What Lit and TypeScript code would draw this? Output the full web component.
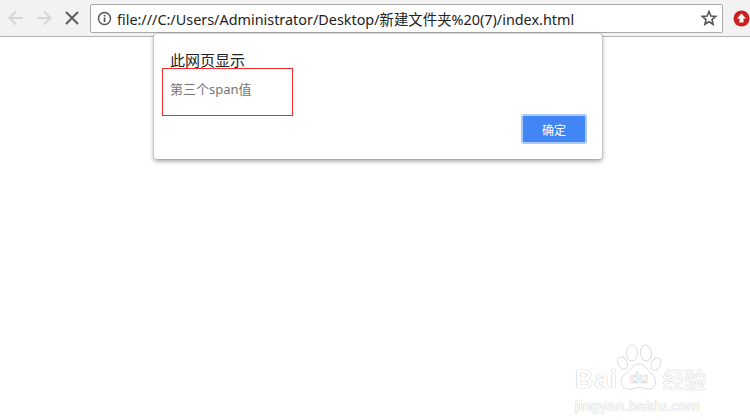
import { LitElement, html, css, svg } from "lit";
import { customElement } from "lit/decorators.js";

@customElement("app-root")
export class AppRoot extends LitElement {
  static styles = css`
    :host { display: block; width: 750px; height: 420px; background: #fff; position: relative; overflow: hidden; font-family: "Liberation Sans", "Noto Sans CJK SC", sans-serif; }
    .toolbar { height: 36px; box-sizing: content-box; background: #f2f2f2; border-bottom: 1px solid #b4b4b4; display: flex; align-items: center; padding-left: 6px; }
    .nav { width: 20px; height: 20px; display: block; flex: none; }
    .back { margin-right: 8px; }
    .fwd { margin-right: 8px; }
    .stop { margin-right: 8px; }
    .omni { width: 633px; height: 29px; box-sizing: border-box; flex: none; background: #fff; border: 1px solid #a9a9a9; border-radius: 2px; display: flex; align-items: center; padding: 0 4px 0 6px; }
    .info { width: 15px; height: 15px; flex: none; margin-right: 5px; }
    .url { flex: 1; font-family: "Noto Sans", "Noto Sans CJK SC", sans-serif; font-size: 14.4px; color: #222; white-space: nowrap; }
    .star { width: 18px; height: 18px; flex: none; }
    .ext { width: 17px; height: 17px; flex: none; margin-left: 10px; }
    .dialog { position: absolute; left: 154px; top: 34px; width: 448px; height: 125px; box-sizing: border-box; background: #fff; border-radius: 2px; box-shadow: 0 0 1px rgba(0,0,0,.55), 0 2px 5px rgba(0,0,0,.4); padding: 18px 15px 0 16px; display: flex; flex-direction: column; }
    .title { font-size: 15px; line-height: 17px; color: #222; }
    .msg { font-family: "Noto Sans", "Noto Sans CJK SC", sans-serif; font-size: 13px; line-height: 17px; color: #757575; margin-top: 12px; }
    .actions { display: flex; justify-content: flex-end; margin-top: 16px; }
    .ok { width: 66px; height: 30px; box-sizing: border-box; background: #4285f4; border: 2px solid #a9c8fb; border-radius: 3px; color: #fff; font: 12px "Liberation Sans", "Noto Sans CJK SC", sans-serif; padding: 0; }
    .mark { position: absolute; left: 162px; top: 68px; width: 131px; height: 48px; box-sizing: border-box; border: 1px solid #f03030; pointer-events: none; }
    .wm { position: absolute; left: 575px; top: 338px; width: 170px; color: #fff; }
    .wm-row { display: flex; align-items: flex-end; height: 55px; }
    .wm-text { color: #fff; text-shadow: 0 0 1px #c4c4c4, 0 0 1px #c4c4c4; font-weight: 700; }
    .bai { font-size: 25px; line-height: 27px; letter-spacing: 1.500px; }
    .paw { width: 44px; height: 50px; flex: none; margin: 0 0 -1px -1px; }
    .jy { font-size: 22px; line-height: 24px; font-weight: 400; margin-left: 1px; }
    .dom { font-size: 14.5px; line-height: 18px; letter-spacing: .5px; font-weight: 400; margin-top: 4px; }
  `;

  private paw() {
    const s = "#dcdcdc";
    return svg`<svg class="paw" viewBox="0 0 44 50" fill="#fff" stroke="${s}" stroke-width="1">
      <ellipse cx="15" cy="9" rx="5.5" ry="8"/>
      <ellipse cx="29" cy="9" rx="5.5" ry="8" transform="rotate(-8 29 9)"/>
      <ellipse cx="5.5" cy="19" rx="4.5" ry="6.5" transform="rotate(-25 5.5 19)"/>
      <ellipse cx="39" cy="20" rx="4.5" ry="6.5" transform="rotate(25 39 20)"/>
      <path d="M22 20c6 0 8 6 13 10 5 4 5 14-2 15-4 .6-7-1.500-11-1.500S15 46 10 45C3 44 2 34 8 30c6-4 8-10 14-10z"/>
      <text x="22" y="39" text-anchor="middle" font-family="Liberation Sans, sans-serif" font-size="15" font-weight="700" fill="#fff" stroke="#cfcfcf" stroke-width=".6">du</text>
    </svg>`;
  }

  render() {
    return html`
      <div class="toolbar">
        <svg class="nav back" viewBox="0 0 20 20" fill="none" stroke="#d6d6d6" stroke-width="2"><path d="M17 10H4M10 3.500 3.500 10l6.500 6.500"/></svg>
        <svg class="nav fwd" viewBox="0 0 20 20" fill="none" stroke="#d6d6d6" stroke-width="2"><path d="M3 10h13M10 3.500l6.500 6.500-6.500 6.500"/></svg>
        <svg class="nav stop" viewBox="0 0 20 20" fill="none" stroke="#5f5f5f" stroke-width="2"><path d="M4 4l12 12M16 4 4 16"/></svg>
        <div class="omni">
          <svg class="info" viewBox="0 0 15 15"><circle cx="7.500" cy="7.500" r="6" fill="none" stroke="#555" stroke-width="1.500"/><rect x="6.700" y="6.500" width="1.700" height="4.500" fill="#555"/><rect x="6.700" y="3.800" width="1.700" height="1.700" fill="#555"/></svg>
          <span class="url">file:///C:/Users/Administrator/Desktop/新建文件夹%20(7)/index.html</span>
          <svg class="star" viewBox="0 0 18 18" fill="none" stroke="#555" stroke-width="1.600" stroke-linejoin="miter"><path d="M9 2.500l1.900 4.500 4.800.4-3.700 3.200 1.100 4.700L9 12.800l-4.100 2.500L6 10.600 2.300 7.400l4.800-.4z"/></svg>
        </div>
        <svg class="ext" viewBox="0 0 17 17"><circle cx="8.500" cy="8.500" r="8" fill="#c8201f"/><path d="M8.500 3.500 13 8.500h-2.500v4h-4v-4H4z" fill="#fff"/></svg>
      </div>
      <div class="dialog">
        <div class="title">此网页显示</div>
        <div class="msg">第三个span值</div>
        <div class="actions"><button class="ok">确定</button></div>
      </div>
      <div class="mark"></div>
      <div class="wm">
        <div class="wm-row">
          <span class="wm-text bai">Bai</span>
          ${this.paw()}
          <span class="wm-text jy">经验</span>
        </div>
        <div class="wm-text dom">jingyan.baidu.com</div>
      </div>
    `;
  }
}
